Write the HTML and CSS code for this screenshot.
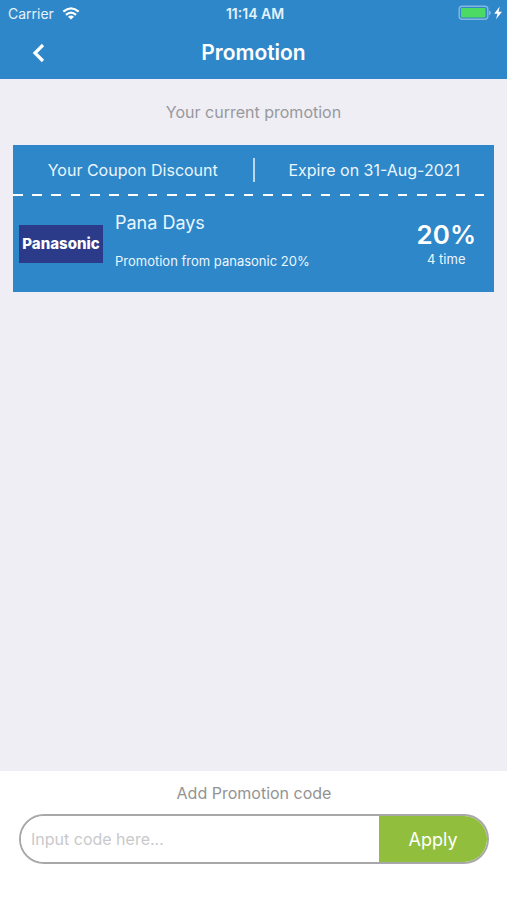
FILE: index.html
```html
<!DOCTYPE html>
<html lang="en">
<head>
<meta charset="utf-8">
<meta name="viewport" content="width=device-width, initial-scale=1">
<title>Promotion</title>
<link rel="stylesheet" href="styles.css">
</head>
<body>
<header class="header">
  <div class="status">
    <div class="carrier">
      <span>Carrier</span>
      <svg class="wifi" viewBox="0 0 18 13" aria-hidden="true">
        <path d="M1.3 4.6Q9-2 16.7 4.6M4 7.8Q9 3.4 14 7.8" fill="none" stroke="currentColor" stroke-width="2.2"/>
        <path d="M6 9.7Q9 7.3 12 9.7L9 12.4Z" fill="currentColor"/>
      </svg>
    </div>
    <span class="clock">11:14 AM</span>
    <svg class="battery" viewBox="0 0 44 16" aria-hidden="true">
      <rect x="1.2" y="1.2" width="28.6" height="13" rx="3" fill="none" stroke="#83b7df" stroke-width="1.5"/>
      <rect x="3" y="3" width="24.5" height="9.5" rx="1" fill="#4cd964"/>
      <path d="M31 5.4Q33 6 33 7.8T31 10.2Z" fill="#83b7df"/>
      <path d="M41.7 1.6L36.2 8.7H39.5L38 14.2L44 6.8H40.6Z" fill="#fff"/>
    </svg>
  </div>
  <nav class="nav">
    <button class="back" type="button" aria-label="Back">
      <svg class="chevron" viewBox="0 0 14 20" aria-hidden="true"><path d="M11 2L3 10L11 18" fill="none" stroke="currentColor" stroke-width="3.2"/></svg>
    </button>
    <h1 class="title">Promotion</h1>
  </nav>
</header>
<main class="main">
  <h2 class="caption">Your current promotion</h2>
  <article class="coupon">
    <div class="coupon-top">
      <span>Your Coupon Discount</span>
      <i class="divider"></i>
      <span>Expire on 31-Aug-2021</span>
    </div>
    <div class="dashes"></div>
    <div class="coupon-body">
      <div class="brand">Panasonic</div>
      <div class="details">
        <h3 class="name">Pana Days</h3>
        <p class="description">Promotion from panasonic 20%</p>
      </div>
      <div class="value">
        <strong class="percent">20%</strong>
        <span class="times">4 time</span>
      </div>
    </div>
  </article>
</main>
<footer class="footer">
  <label class="code-label" for="code">Add Promotion code</label>
  <form class="code-form">
    <input class="code-input" id="code" type="text" placeholder="Input code here...">
    <button class="apply" type="button">Apply</button>
  </form>
</footer>
</body>
</html>
```
FILE: styles.css
```css
* {
  box-sizing: border-box;
}

body {
  display: flex;
  flex-direction: column;
  min-height: 100vh;
  margin: 0;
  background: #efeef4;
  font-family: Inter, "Liberation Sans", sans-serif;
  font-size: 16px;
}

h1, h2, h3, p {
  margin: 0;
  font-weight: 400;
}

button, input {
  border: 0;
  font: inherit;
}

svg {
  display: block;
}

.header {
  background: #2e87c8;
  color: #fff;
}

.status {
  display: grid;
  grid-template-columns: 1fr auto 1fr;
  align-items: center;
  height: 28px;
  padding: 0 5px 2px 8px;
  font-size: 14px;
}

.carrier {
  display: flex;
  align-items: center;
  gap: 8px;
  color: #e4f2fc;
}

.wifi {
  width: 18px;
  height: 13px;
  color: #fff;
}

.clock {
  font-weight: 600;
  color: #e4f2fc;
}

.battery {
  justify-self: end;
  width: 44px;
  height: 16px;
}

.nav {
  display: grid;
  grid-template-columns: 1fr auto 1fr;
  align-items: center;
  height: 51px;
  padding: 0 24px 2px;
}

.back {
  justify-self: start;
  padding: 4px 8px;
  background: none;
  color: #fff;
}

.chevron {
  width: 14px;
  height: 20px;
}

.title {
  font-size: 21px;
  font-weight: 600;
}

.main {
  flex: 1;
  padding: 0 13px;
}

.caption {
  padding: 23px 0;
  font-size: 16px;
  line-height: 20px;
  text-align: center;
  color: #98989d;
}

.coupon {
  background: #2e87c8;
  color: #eaf6ff;
}

.coupon-top {
  display: grid;
  grid-template-columns: 1fr 2px 1fr;
  align-items: center;
  height: 49px;
  font-size: 16px;
  text-align: center;
}

.divider {
  height: 24px;
  background: #b9d8ee;
}

.dashes {
  height: 2px;
  background: repeating-linear-gradient(to right, #fff 0 2%, transparent 2% 4%);
}

.coupon-body {
  display: flex;
  align-items: center;
  gap: 12px;
  height: 96px;
  padding: 0 18px 0 6px;
}

.brand {
  width: 84px;
  background: #2c3b89;
  color: #fff;
  font-size: 15px;
  font-weight: 800;
  line-height: 38px;
  text-align: center;
}

.details {
  flex: 1;
  display: flex;
  flex-direction: column;
  gap: 18px;
  padding-bottom: 6px;
}

.name {
  font-size: 18px;
  line-height: 22px;
}

.description {
  font-size: 13px;
  line-height: 18px;
}

.value {
  display: flex;
  flex-direction: column;
  align-items: center;
}

.percent {
  font-size: 26px;
  font-weight: 600;
  line-height: 30px;
  color: #fff;
}

.times {
  font-size: 13px;
  line-height: 18px;
}

.footer {
  padding: 12px 18px 36px 19px;
  background: #fff;
}

.code-label {
  display: block;
  margin-bottom: 11px;
  line-height: 20px;
  text-align: center;
  color: #939393;
}

.code-form {
  display: flex;
  height: 50px;
  border: 2px solid #a8a8ab;
  border-radius: 25px;
  overflow: hidden;
}

.code-input {
  flex: 1;
  min-width: 0;
  padding: 0 10px;
  background: #fff;
  outline: 0;
}

.code-input::placeholder {
  color: #c9c9cc;
  opacity: 1;
}

.apply {
  width: 108px;
  padding: 0;
  background: #91bf3d;
  color: #fff;
  font-size: 18px;
}
```
